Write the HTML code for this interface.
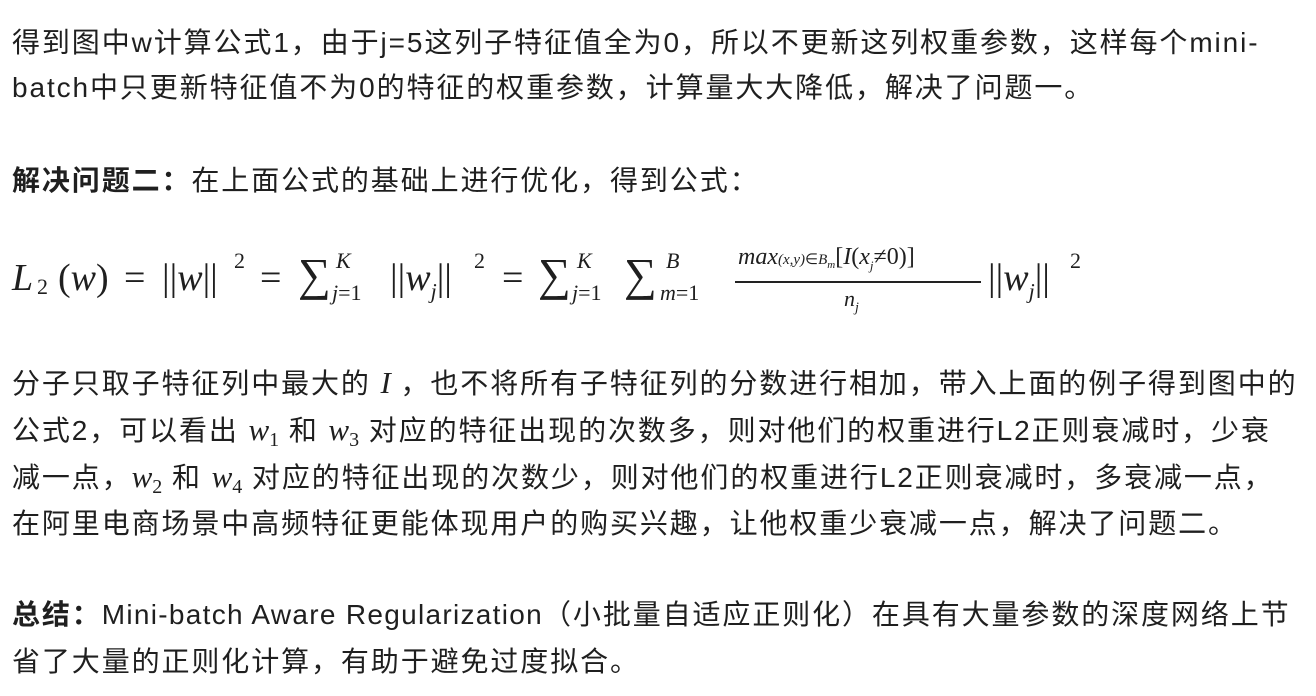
<!DOCTYPE html>
<html><head><meta charset="utf-8"><style>
body{margin:0;width:1316px;height:696px;background:#fff;overflow:hidden;position:relative;color:#1f1f1f;font-family:"Liberation Sans","Noto Sans CJK SC",sans-serif;font-size:28px;letter-spacing:1.9px}
.p{position:absolute;left:12px;white-space:nowrap}
.l{height:47px;line-height:47px}
b{font-weight:bold}
.m{font-family:"Liberation Serif",serif;font-style:italic;font-size:31px;letter-spacing:0}
.m sub{font-style:normal;font-size:20px;vertical-align:-6px}
#f{position:absolute;left:12px;top:240px;height:80px;font-family:"Liberation Serif",serif;font-size:38px;letter-spacing:0;white-space:nowrap}
#f span{position:absolute}
.i{font-style:italic}
.s{font-size:22px}
.b{font-size:46px}
.lt{letter-spacing:1.3px}
</style></head><body>
<div class="p" style="top:20px">
<div class="l" style="height:45px;line-height:45px">得到图中w计算公式1，由于j=5这列子特征值全为0，所以不更新这列权重参数，这样每个mini-</div>
<div class="l" style="height:45px;line-height:45px">batch中只更新特征值不为0的特征的权重参数，计算量大大降低，解决了问题一。</div>
</div>
<div class="p" style="top:157px"><div class="l"><b>解决问题二：</b>在上面公式的基础上进行优化，得到公式：</div></div>
<div id="f">
<span class="i" style="left:0;top:16px">L</span><span style="left:25px;top:34px;font-size:22px">2</span>
<span style="left:46px;top:16px">(<i>w</i>)</span><span style="left:112px;top:16px">=</span>
<span style="left:150px;top:16px">||<i>w</i>||</span><span class="s" style="left:222px;top:8px">2</span>
<span style="left:248px;top:16px">=</span>
<span class="b" style="left:286px;top:8px">∑</span><span class="s i" style="left:324px;top:8px">K</span><span class="s" style="left:320px;top:40px"><i>j</i>=1</span>
<span style="left:378px;top:16px">||<i>w<sub style="font-size:22px">j</sub></i>||</span><span class="s" style="left:462px;top:8px">2</span>
<span style="left:490px;top:16px">=</span>
<span class="b" style="left:526px;top:8px">∑</span><span class="s i" style="left:565px;top:8px">K</span><span class="s" style="left:560px;top:40px"><i>j</i>=1</span>
<span class="b" style="left:612px;top:8px">∑</span><span class="s i" style="left:654px;top:8px">B</span><span class="s" style="left:648px;top:40px"><i>m</i>=1</span>
<span style="left:726px;top:4px;font-size:24px"><i>max</i><span style="position:static;font-size:15px"><i>(x,y)</i>∈<i>B<sub style="font-size:11px">m</sub></i></span>[<i>I</i>(<i>x<sub style="font-size:13px">j</sub></i>≠0)]</span>
<span style="left:723px;top:41px;width:246px;height:2px;background:#222"></span>
<span class="i" style="left:832px;top:46px;font-size:22px">n<sub style="font-size:14px">j</sub></span>
<span style="left:976px;top:16px">||<i>w<sub style="font-size:22px">j</sub></i>||</span><span class="s" style="left:1058px;top:8px">2</span>
</div>
<div class="p" style="top:359px">
<div class="l">分子只取子特征列中最大的 <span class="m">I</span> ，也不将所有子特征列的分数进行相加，带入上面的例子得到图中的</div>
<div class="l">公式2，可以看出 <span class="m">w<sub>1</sub></span> 和 <span class="m">w<sub>3</sub></span> 对应的特征出现的次数多，则对他们的权重进行L2正则衰减时，少衰</div>
<div class="l">减一点，<span class="m">w<sub>2</sub></span> 和 <span class="m">w<sub>4</sub></span> 对应的特征出现的次数少，则对他们的权重进行L2正则衰减时，多衰减一点，</div>
<div class="l">在阿里电商场景中高频特征更能体现用户的购买兴趣，让他权重少衰减一点，解决了问题二。</div>
</div>
<div class="p" style="top:591px">
<div class="l"><b>总结：</b><span class="lt">Mini-batch Aware Regularization</span>（小批量自适应正则化）在具有大量参数的深度网络上节</div>
<div class="l">省了大量的正则化计算，有助于避免过度拟合。</div>
</div>
</body></html>
